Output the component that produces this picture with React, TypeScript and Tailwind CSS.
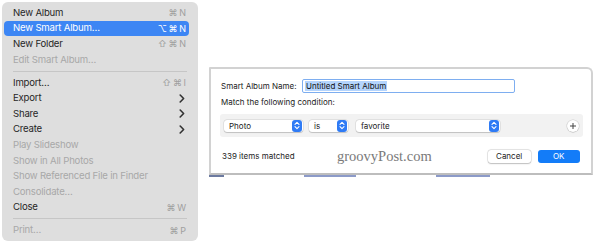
import React from "react";

type Item =
  | { kind: "item"; label: string; sc?: string; arrow?: boolean; disabled?: boolean; active?: boolean }
  | { kind: "sep" };

const items: Item[] = [
  { kind: "item", label: "New Album", sc: "⌘N" },
  { kind: "item", label: "New Smart Album…", sc: "⌥⌘N", active: true },
  { kind: "item", label: "New Folder", sc: "⇧⌘N" },
  { kind: "item", label: "Edit Smart Album…", disabled: true },
  { kind: "sep" },
  { kind: "item", label: "Import…", sc: "⇧⌘I" },
  { kind: "item", label: "Export", arrow: true },
  { kind: "item", label: "Share", arrow: true },
  { kind: "item", label: "Create", arrow: true },
  { kind: "item", label: "Play Slideshow", disabled: true },
  { kind: "item", label: "Show in All Photos", disabled: true },
  { kind: "item", label: "Show Referenced File in Finder", disabled: true },
  { kind: "item", label: "Consolidate…", disabled: true },
  { kind: "item", label: "Close", sc: "⌘W" },
  { kind: "sep" },
  { kind: "item", label: "Print…", sc: "⌘P", disabled: true },
];

function Chevron({ color }: { color: string }) {
  return (
    <svg width="6" height="9" viewBox="0 0 6 9">
      <path d="M1.2 1 L4.6 4.5 L1.2 8" fill="none" stroke={color} strokeWidth="1.6" strokeLinecap="round" strokeLinejoin="round" />
    </svg>
  );
}

function Stepper() {
  return (
    <div className="w-[10px] h-[12px] rounded-[3px] bg-[#2f7bf5] flex items-center justify-center">
      <svg width="6" height="9" viewBox="0 0 6 9">
        <path d="M1 3.3 L3 1.3 L5 3.3 M1 5.7 L3 7.7 L5 5.7" fill="none" stroke="white" strokeWidth="1.1" strokeLinecap="round" strokeLinejoin="round" />
      </svg>
    </div>
  );
}

function Popup({ label, w }: { label: string; w: string }) {
  return (
    <div className={`${w} h-[12px] bg-white rounded-[3px] shadow-[0_0_0_0.5px_rgba(0,0,0,0.12),0_0.5px_1px_rgba(0,0,0,0.15)] flex items-center justify-between pl-[5px] pr-[1px]`}>
      <span className="text-[8px] text-[#222] leading-none">{label}</span>
      <Stepper />
    </div>
  );
}

export default function App() {
  return (
    <div className="w-[600px] h-[244px] bg-white flex overflow-hidden" style={{ fontFamily: "Inter, 'Liberation Sans', sans-serif" }}>
      {/* Menu */}
      <div className="ml-[2px] mt-[2px] w-[196px] h-[239px] bg-[#dedede] rounded-[6px] pt-[3.2px] flex flex-col shrink-0">
        {items.map((it, i) =>
          it.kind === "sep" ? (
            <div key={i} className="h-[7.4px] flex items-center px-[11px]">
              <div className="h-px w-full bg-[#c6c6c6]" />
            </div>
          ) : (
            <div
              key={i}
              className={`h-[15.6px] flex items-center justify-between pl-[9px] pr-[3px] ml-[2px] mr-[9px] rounded-[4px] ${
                it.active ? "bg-[#3d86f4] text-white" : it.disabled ? "text-[#a8a8a8]" : "text-[#262626]"
              }`}
            >
              <span className="text-[9.6px] tracking-[-0.2px]">{it.label}</span>
              {it.sc && (
                <span className={`text-[9px] ${it.active ? "text-white" : "text-[#9e9e9e]"}`}>
                  {it.sc.split("").join("\u2009")}
                </span>
              )}
              {it.arrow && (
                <span className="mr-[1px] flex">
                  <Chevron color="#333" />
                </span>
              )}
            </div>
          )
        )}
      </div>

      {/* Dialog area */}
      <div className="ml-[11px] mt-[67px] flex flex-col">
        <div className="w-[384px] h-[108px] bg-white border-[2px] border-[#d2d2d2] border-b-[#bdbdbd] rounded-tr-[6px] rounded-tl-[1px] pl-[10px] pr-[10px] flex flex-col">
          <div className="mt-[10px] h-[14px] flex items-center">
            <span className="w-[81px] shrink-0 whitespace-nowrap text-[8px] text-[#222]">Smart Album Name:</span>
            <div className="w-[213px] h-[14px] shrink-0 rounded-[2px] border-[1.5px] border-[#7eaef0] bg-white flex items-center pl-[2px]">
              <span className="bg-[#b4d4fd] text-[8px] text-[#111] leading-[10px] px-[1px] whitespace-nowrap">Untitled Smart Album</span>
            </div>
          </div>
          <div className="mt-[2px] h-[14px] flex items-center text-[8px] text-[#222]">Match the following condition:</div>
          <div className="mt-[5px] ml-[-1px] w-[363px] h-[23px] bg-[#f2f2f2] rounded-[3px] flex items-center pl-[4px]">
            <Popup label="Photo" w="w-[79px]" />
            <div className="ml-[6px]">
              <Popup label="is" w="w-[39px]" />
            </div>
            <div className="ml-[8px]">
              <Popup label="favorite" w="w-[144px]" />
            </div>
            <div className="ml-[67px] w-[12px] h-[12px] rounded-full bg-white shadow-[0_0_0_0.5px_rgba(0,0,0,0.15),0_0.5px_1px_rgba(0,0,0,0.15)] flex items-center justify-center">
              <svg width="8" height="8" viewBox="0 0 8 8">
                <path d="M4 1 V7 M1 4 H7" stroke="#444" strokeWidth="1" />
              </svg>
            </div>
          </div>
          <div className="mt-[12px] h-[14px] flex items-center">
            <span className="ml-[1px] w-[115px] shrink-0 whitespace-nowrap text-[8px] text-[#222]">339 items matched</span>
            <span className="text-[14.5px] text-[#7a7a7a] leading-none whitespace-nowrap" style={{ fontFamily: "'Liberation Serif', serif" }}>
              groovyPost.com
            </span>
            <div className="ml-[56px] w-[43px] h-[13px] shrink-0 bg-white rounded-[3px] shadow-[0_0_0_0.5px_rgba(0,0,0,0.15),0_0.5px_1.5px_rgba(0,0,0,0.2)] flex items-center justify-center text-[8px] text-[#222]">
              Cancel
            </div>
            <div className="ml-[7px] w-[42px] h-[13px] shrink-0 bg-[#137cf8] rounded-[3px] flex items-center justify-center text-[8px] text-white">
              OK
            </div>
          </div>
        </div>
        <div className="h-[2px] flex">
          <div className="w-[15px] h-[2px] bg-[#6c7aa0]" />
          <div className="ml-[80px] w-[52px] h-[2px] bg-[#8c9ac8]" />
          <div className="ml-[80px] w-[54px] h-[2px] bg-[#8c9ac8]" />
        </div>
      </div>
    </div>
  );
}
